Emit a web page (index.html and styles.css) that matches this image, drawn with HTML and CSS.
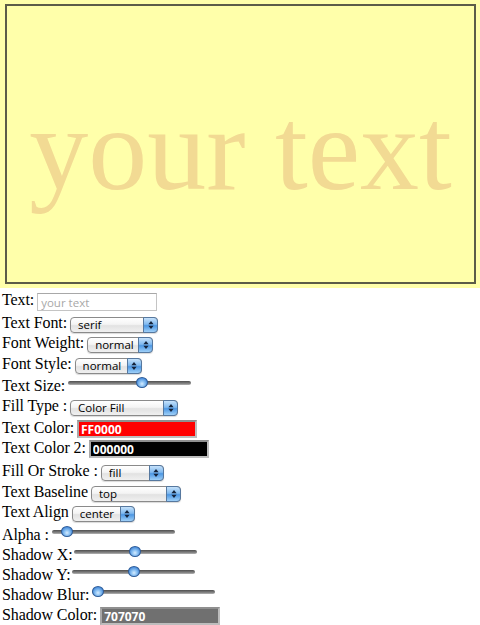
FILE: index.html
```html
<!DOCTYPE html>
<html>
<head>
<meta charset="utf-8">
<title>Canvas Text</title>
<link rel="stylesheet" href="styles.css">
</head>
<body>
<div class="stage"><div class="frame"><div class="sample">your text</div></div></div>
<form class="controls">
  <div class="row"><label class="lbl">Text:</label><input class="txt" type="text" placeholder="your text"></div>
  <div class="row"><label class="lbl">Text Font:</label><span class="sel w88"><select><option>serif</option></select><span class="arr"><svg width="6" height="10" viewBox="0 0 6 10"><path d="M3 1 L5.6 4.2 H0.4 Z M0.4 5.8 H5.6 L3 9 Z"/></svg></span></span></div>
  <div class="row"><label class="lbl">Font Weight:</label><span class="sel w66"><select><option>normal</option></select><span class="arr"><svg width="6" height="10" viewBox="0 0 6 10"><path d="M3 1 L5.6 4.2 H0.4 Z M0.4 5.8 H5.6 L3 9 Z"/></svg></span></span></div>
  <div class="row"><label class="lbl">Font Style:</label><span class="sel w67"><select><option>normal</option></select><span class="arr"><svg width="6" height="10" viewBox="0 0 6 10"><path d="M3 1 L5.6 4.2 H0.4 Z M0.4 5.8 H5.6 L3 9 Z"/></svg></span></span></div>
  <div class="row"><label class="lbl">Text Size:</label><input class="rng" type="range" min="0" max="100" value="61"></div>
  <div class="row"><label class="lbl">Fill Type :</label><span class="sel w108"><select><option>Color Fill</option></select><span class="arr"><svg width="6" height="10" viewBox="0 0 6 10"><path d="M3 1 L5.6 4.2 H0.4 Z M0.4 5.8 H5.6 L3 9 Z"/></svg></span></span></div>
  <div class="row"><label class="lbl">Text Color:</label><input class="txt clr red" type="text" value="FF0000"></div>
  <div class="row"><label class="lbl">Text Color 2:</label><input class="txt clr black" type="text" value="000000"></div>
  <div class="row"><label class="lbl">Fill Or Stroke :</label><span class="sel w63"><select><option>fill</option></select><span class="arr"><svg width="6" height="10" viewBox="0 0 6 10"><path d="M3 1 L5.6 4.2 H0.4 Z M0.4 5.8 H5.6 L3 9 Z"/></svg></span></span></div>
  <div class="row"><label class="lbl">Text Baseline</label><span class="sel w90"><select><option>top</option></select><span class="arr"><svg width="6" height="10" viewBox="0 0 6 10"><path d="M3 1 L5.6 4.2 H0.4 Z M0.4 5.8 H5.6 L3 9 Z"/></svg></span></span></div>
  <div class="row"><label class="lbl">Text Align</label><span class="sel w63"><select><option>center</option></select><span class="arr"><svg width="6" height="10" viewBox="0 0 6 10"><path d="M3 1 L5.6 4.2 H0.4 Z M0.4 5.8 H5.6 L3 9 Z"/></svg></span></span></div>
  <div class="row"><label class="lbl">Alpha :</label><input class="rng" type="range" min="0" max="100" value="8"></div>
  <div class="row"><label class="lbl tight">Shadow X:</label><input class="rng" type="range" min="0" max="100" value="50"></div>
  <div class="row"><label class="lbl tight wide">Shadow Y:</label><input class="rng" type="range" min="0" max="100" value="50"></div>
  <div class="row"><label class="lbl">Shadow Blur:</label><input class="rng" type="range" min="0" max="100" value="0"></div>
  <div class="row"><label class="lbl">Shadow Color:</label><input class="txt clr grey" type="text" value="707070"></div>
</form>
</body>
</html>
```

FILE: styles.css
```css
html, body {
  margin: 0;
  padding: 0;
  background: #ffffff;
}

body {
  font-family: "Liberation Serif", "Times New Roman", serif;
  font-size: 16px;
  color: #000;
}

.stage {
  height: 288px;
  background: #ffffaa;
  padding: 4px 4px 4px 5px;
  box-sizing: border-box;
}

.frame {
  height: 280px;
  border: 2px solid #5c5c48;
  box-sizing: border-box;
  padding-top: 85px;
}

.sample {
  font-family: "Liberation Serif", "Times New Roman", serif;
  font-size: 118px;
  line-height: 118px;
  text-align: center;
  color: #f2da93;
}

.controls {
  display: grid;
  grid-template-rows: 23px 20px 21px 22px 20px 22px 20px 23px 21px 20px 23px 20px 20px 20px 20px 20px;
  padding: 3px 0 0 2px;
}

.row {
  display: flex;
  align-items: flex-start;
  gap: 3px;
}

.lbl {
  line-height: 18px;
  white-space: nowrap;
  letter-spacing: -0.1px;
}

.lbl.tight {
  margin-right: -2px;
}

.lbl.wide {
  min-width: 69px;
}

.txt {
  margin: 2px 0 0 0;
  width: 120px;
  height: 18px;
  box-sizing: border-box;
  border: 1px solid #c4c4c4;
  border-top-color: #a8a8a8;
  background: #fff;
  padding: 0 0 0 3px;
  font-family: "Open Sans", "DejaVu Sans", sans-serif;
  font-size: 11.5px;
  color: #222;
  outline: none;
}

.txt::placeholder {
  color: #a8a8a8;
}

.clr {
  margin-top: 1px;
  border: 2px solid #bdbdbd;
  border-top-color: #8f8f8f;
  border-left-color: #a8a8a8;
  color: #fff;
  font-size: 12px;
  font-weight: 700;
  padding-left: 2px;
}

.red { background: #ff0000; }
.black { background: #000000; }
.grey { background: #707070; }

.sel {
  position: relative;
  display: inline-block;
  height: 16px;
  margin-top: 3px;
}

.w63 { width: 63px; }
.w66 { width: 66px; }
.w67 { width: 67px; }
.w88 { width: 88px; }
.w90 { width: 90px; }
.w108 { width: 108px; }

.sel select {
  -webkit-appearance: none;
  appearance: none;
  display: block;
  width: 100%;
  height: 16px;
  margin: 0;
  box-sizing: border-box;
  border: 1px solid #8a8a8a;
  border-radius: 4px;
  background: linear-gradient(#ffffff, #f4f4f4 45%, #e2e2e2 55%, #f0f0f0);
  padding: 0 0 0 7px;
  font-family: "Open Sans", "DejaVu Sans", sans-serif;
  font-size: 11.5px;
  line-height: 14px;
  color: #000;
  box-shadow: 0 1px 1px rgba(0, 0, 0, 0.15);
}

.arr {
  position: absolute;
  right: 0;
  top: 0;
  width: 15px;
  height: 16px;
  box-sizing: border-box;
  border: 1px solid #56789f;
  border-radius: 0 4px 4px 0;
  background: linear-gradient(#c6e2fb, #80b9ef 45%, #4d97e3 55%, #9fd0f8);
  display: flex;
  align-items: center;
  justify-content: center;
  pointer-events: none;
}

.arr svg {
  fill: #15233a;
}

.rng {
  -webkit-appearance: none;
  appearance: none;
  width: 123px;
  height: 12px;
  margin: 0;
  padding: 0;
  background: transparent;
}

.rng::-webkit-slider-runnable-track {
  height: 4px;
  border-radius: 2px;
  background: linear-gradient(#4e4e4e, #8a8a8a 70%, #b8b8b8);
}

.rng::-webkit-slider-thumb {
  -webkit-appearance: none;
  appearance: none;
  width: 12px;
  height: 11px;
  margin-top: -4px;
  border-radius: 50%;
  box-sizing: border-box;
  border: 1px solid #2d5c99;
  background: radial-gradient(circle at 50% 65%, #d6ecff 0, #8cc2f3 35%, #3f84d6 80%, #2f6fc0 100%);
}
```
